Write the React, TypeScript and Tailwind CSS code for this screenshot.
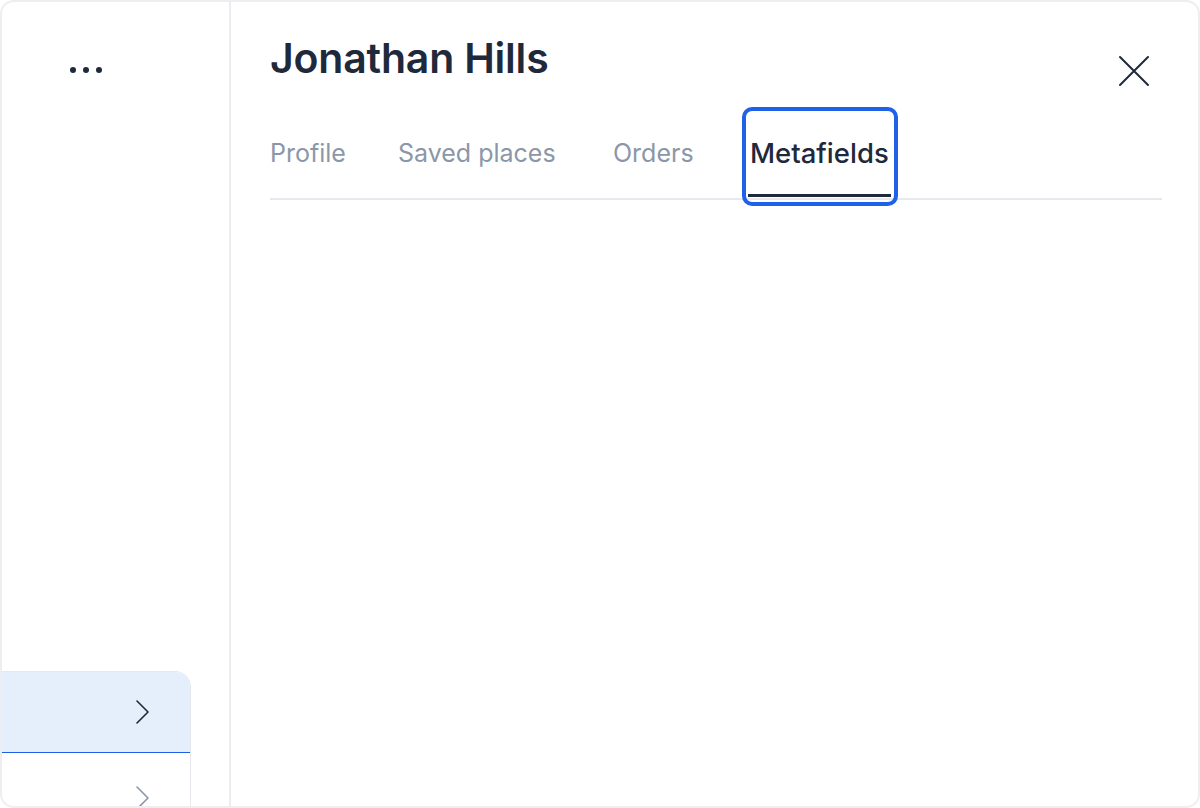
import React from "react";

const tabs = [
  { key: "profile", label: "Profile", w: "w-[128px]" },
  { key: "saved", label: "Saved places", w: "w-[215px]" },
  { key: "orders", label: "Orders", w: "w-[137px]" },
  { key: "metafields", label: "Metafields", w: "w-[150px]" },
];

function Chevron({ className }: { className?: string }) {
  return (
    <svg viewBox="0 0 24 24" className={className} fill="none" stroke="currentColor" strokeWidth={1.6} strokeLinecap="round" strokeLinejoin="round">
      <path d="M7 1l11 11-11 11" />
    </svg>
  );
}

export default function App() {
  const active = "metafields";

  return (
    <div className="h-[808px] w-[1200px] bg-white font-['Inter',sans-serif]">
      <div className="flex h-full w-full overflow-hidden rounded-[14px] border-2 border-[#eeeef2] bg-white">
        {/* left list */}
        <aside className="flex w-[229px] shrink-0 flex-col border-r-2 border-[#ececf0]">
          <div className="flex h-[136px] items-center justify-center gap-[7px] pr-[60px]">
            <span className="h-[6px] w-[6px] rounded-full bg-[#1e293b]" />
            <span className="h-[6px] w-[6px] rounded-full bg-[#1e293b]" />
            <span className="h-[6px] w-[6px] rounded-full bg-[#1e293b]" />
          </div>
          <div className="mt-auto mr-[38px] overflow-hidden rounded-tr-[16px] border-t border-r border-[#e6e8ee]">
            <div className="flex h-[81px] items-center justify-end border-b-[1.5px] border-[#1d5fe8] bg-[#e5effc] pr-[36px]">
              <Chevron className="h-[24px] w-[24px] text-[#1e293b]" />
            </div>
            <div className="flex h-[53px] items-end justify-end pr-[36px]">
              <Chevron className="-mb-[4px] h-[24px] w-[24px] text-[#8b97a8]" />
            </div>
          </div>
        </aside>

        {/* detail panel */}
        <main className="flex min-w-0 flex-1 flex-col pl-[39px] pr-[36px]">
          <div className="flex items-start justify-between pt-[32px]">
            <h1 className="text-[41px] font-semibold leading-[48px] tracking-[-0.2px] text-[#1e293b]">Jonathan Hills</h1>
            <button className="mr-[12px] mt-[21px] text-[#1e293b]" aria-label="Close">
              <svg viewBox="0 0 32 32" className="h-[32px] w-[32px]" fill="none" stroke="currentColor" strokeWidth={2} strokeLinecap="round">
                <path d="M2 2l28 28M30 2L2 30" />
              </svg>
            </button>
          </div>

          <div className="relative mt-[40px] flex border-b-2 border-[#e8e9ee]">
            {tabs.map((t) => {
              const on = t.key === active;
              return (
                <div key={t.key} className={`relative ${t.w} shrink-0`}>
                  <div
                    className={
                      on
                        ? "relative h-[71px] pt-[8px] text-[27.5px] font-medium leading-[36px] text-[#1e293b]"
                        : "h-[71px] pt-[10px] text-[25px] leading-[32px] text-[#8b97a8]"
                    }
                  >
                    {t.label}
                    {on ? <span className="absolute bottom-[1px] left-[-2px] h-[3px] w-[143px] bg-[#1e293b]" /> : null}
                  </div>
                  {on ? (
                    <span className="pointer-events-none absolute -top-[20px] -left-[8px] h-[99px] w-[156px] rounded-[10px] border-[4px] border-[#1f61e8]" />
                  ) : null}
                </div>
              );
            })}
          </div>
        </main>
      </div>
    </div>
  );
}
